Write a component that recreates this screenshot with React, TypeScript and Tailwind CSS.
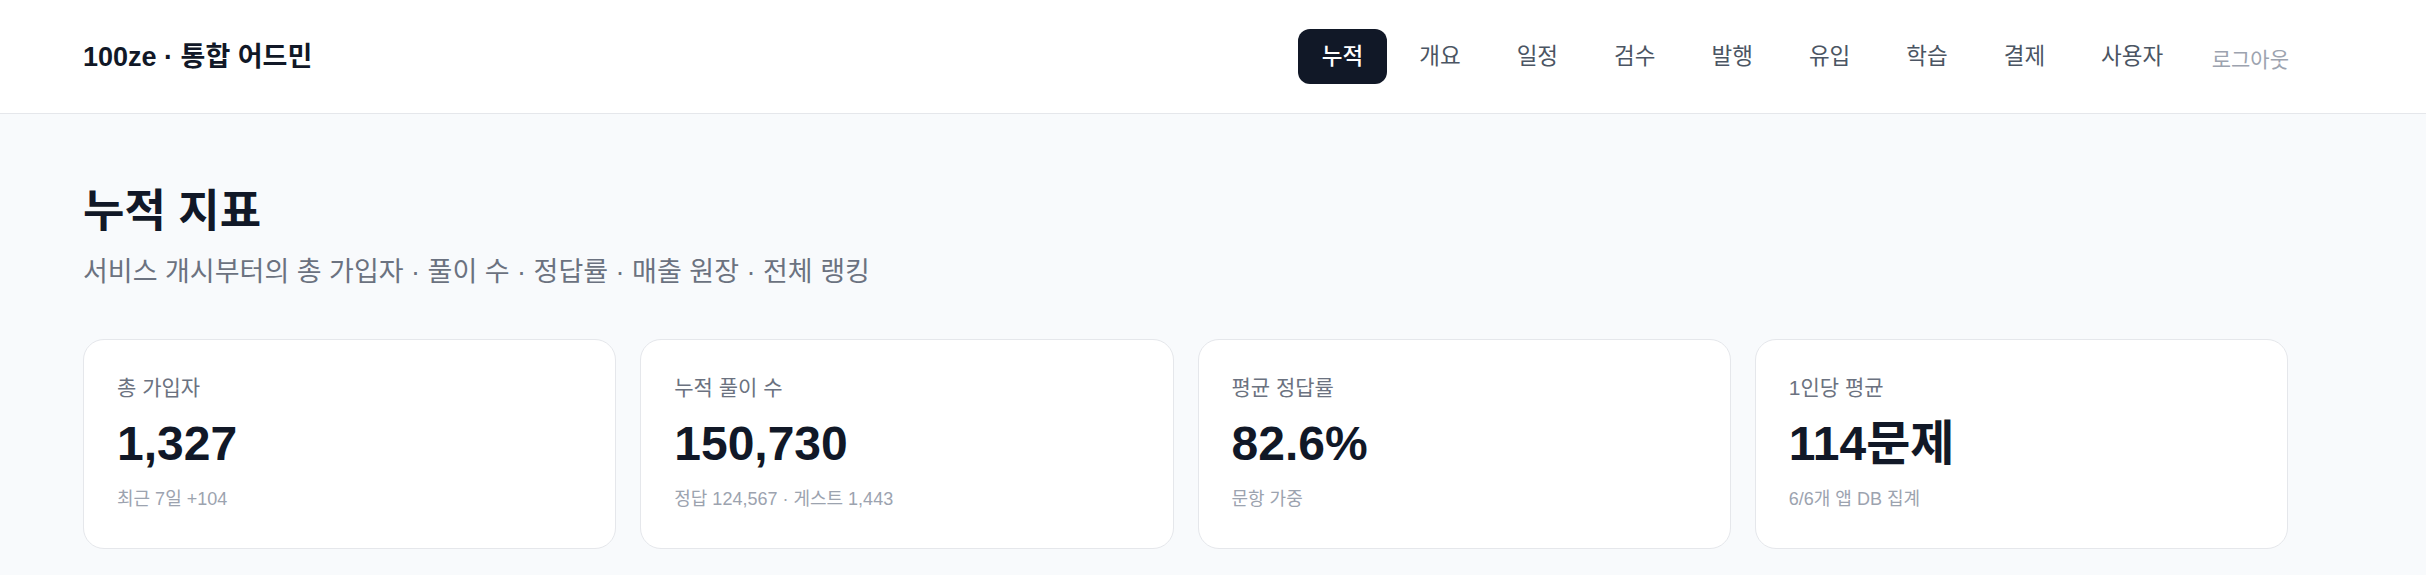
export default function App() {
  const nav = ["누적", "개요", "일정", "검수", "발행", "유입", "학습", "결제", "사용자"];
  const cards = [
    { label: "총 가입자", value: "1,327", sub: "최근 7일 +104" },
    { label: "누적 풀이 수", value: "150,730", sub: "정답 124,567 · 게스트 1,443" },
    { label: "평균 정답률", value: "82.6%", sub: "문항 가중" },
    { label: "1인당 평균", value: "114문제", sub: "6/6개 앱 DB 집계" },
  ];
  return (
    <div className="min-h-screen bg-[#f8fafc] font-['Liberation_Sans','Noto_Sans_CJK_KR',sans-serif]">
      <header className="bg-white border-b-[1.5px] border-[#e5e7eb]">
        <div className="pl-[83px] pr-[137px] py-[29px] flex items-center justify-between">
          <div className="text-[27px] leading-[36px] font-bold text-[#111827]">100ze · 통합 어드민</div>
          <nav className="flex items-center gap-[9px]">
            {nav.map((n, i) => (
              <button
                key={n}
                className={
                  i === 0
                    ? "px-[23.5px] h-[55px] rounded-[12px] bg-[#111827] text-white text-[22.5px] leading-[30px] font-medium"
                    : "px-[23.5px] h-[55px] rounded-[12px] text-[#4b5563] text-[22.5px] leading-[30px]"
                }
              >
                {n}
              </button>
            ))}
            <button className="ml-[16px] mt-[6px] text-[21px] leading-[30px] text-[#9ca3af]">로그아웃</button>
          </nav>
        </div>
      </header>
      <main className="pl-[83px] pr-[138px] pt-[71px] pb-[28px]">
        <h1 className="text-[45px] leading-[54px] font-bold text-[#111827]">누적 지표</h1>
        <p className="mt-[12px] text-[27px] leading-[42px] text-[#6b7280]">
          서비스 개시부터의 총 가입자 · 풀이 수 · 정답률 · 매출 원장 · 전체 랭킹
        </p>
        <div className="mt-[46px] grid grid-cols-4 gap-[24px]">
          {cards.map((c) => (
            <div
              key={c.label}
              className="rounded-[21px] border-[1.5px] border-[#e5e7eb] bg-white pl-[33px] pr-[24px] pt-[33px] pb-[37px]"
            >
              <div className="text-[21px] leading-[30px] text-[#6b7280]">{c.label}</div>
              <div className="mt-[17px] text-[48px] leading-[48px] font-bold text-[#111827]">{c.value}</div>
              <div className="mt-[19px] text-[18px] leading-[24px] text-[#9ca3af]">{c.sub}</div>
            </div>
          ))}
        </div>
      </main>
    </div>
  );
}
